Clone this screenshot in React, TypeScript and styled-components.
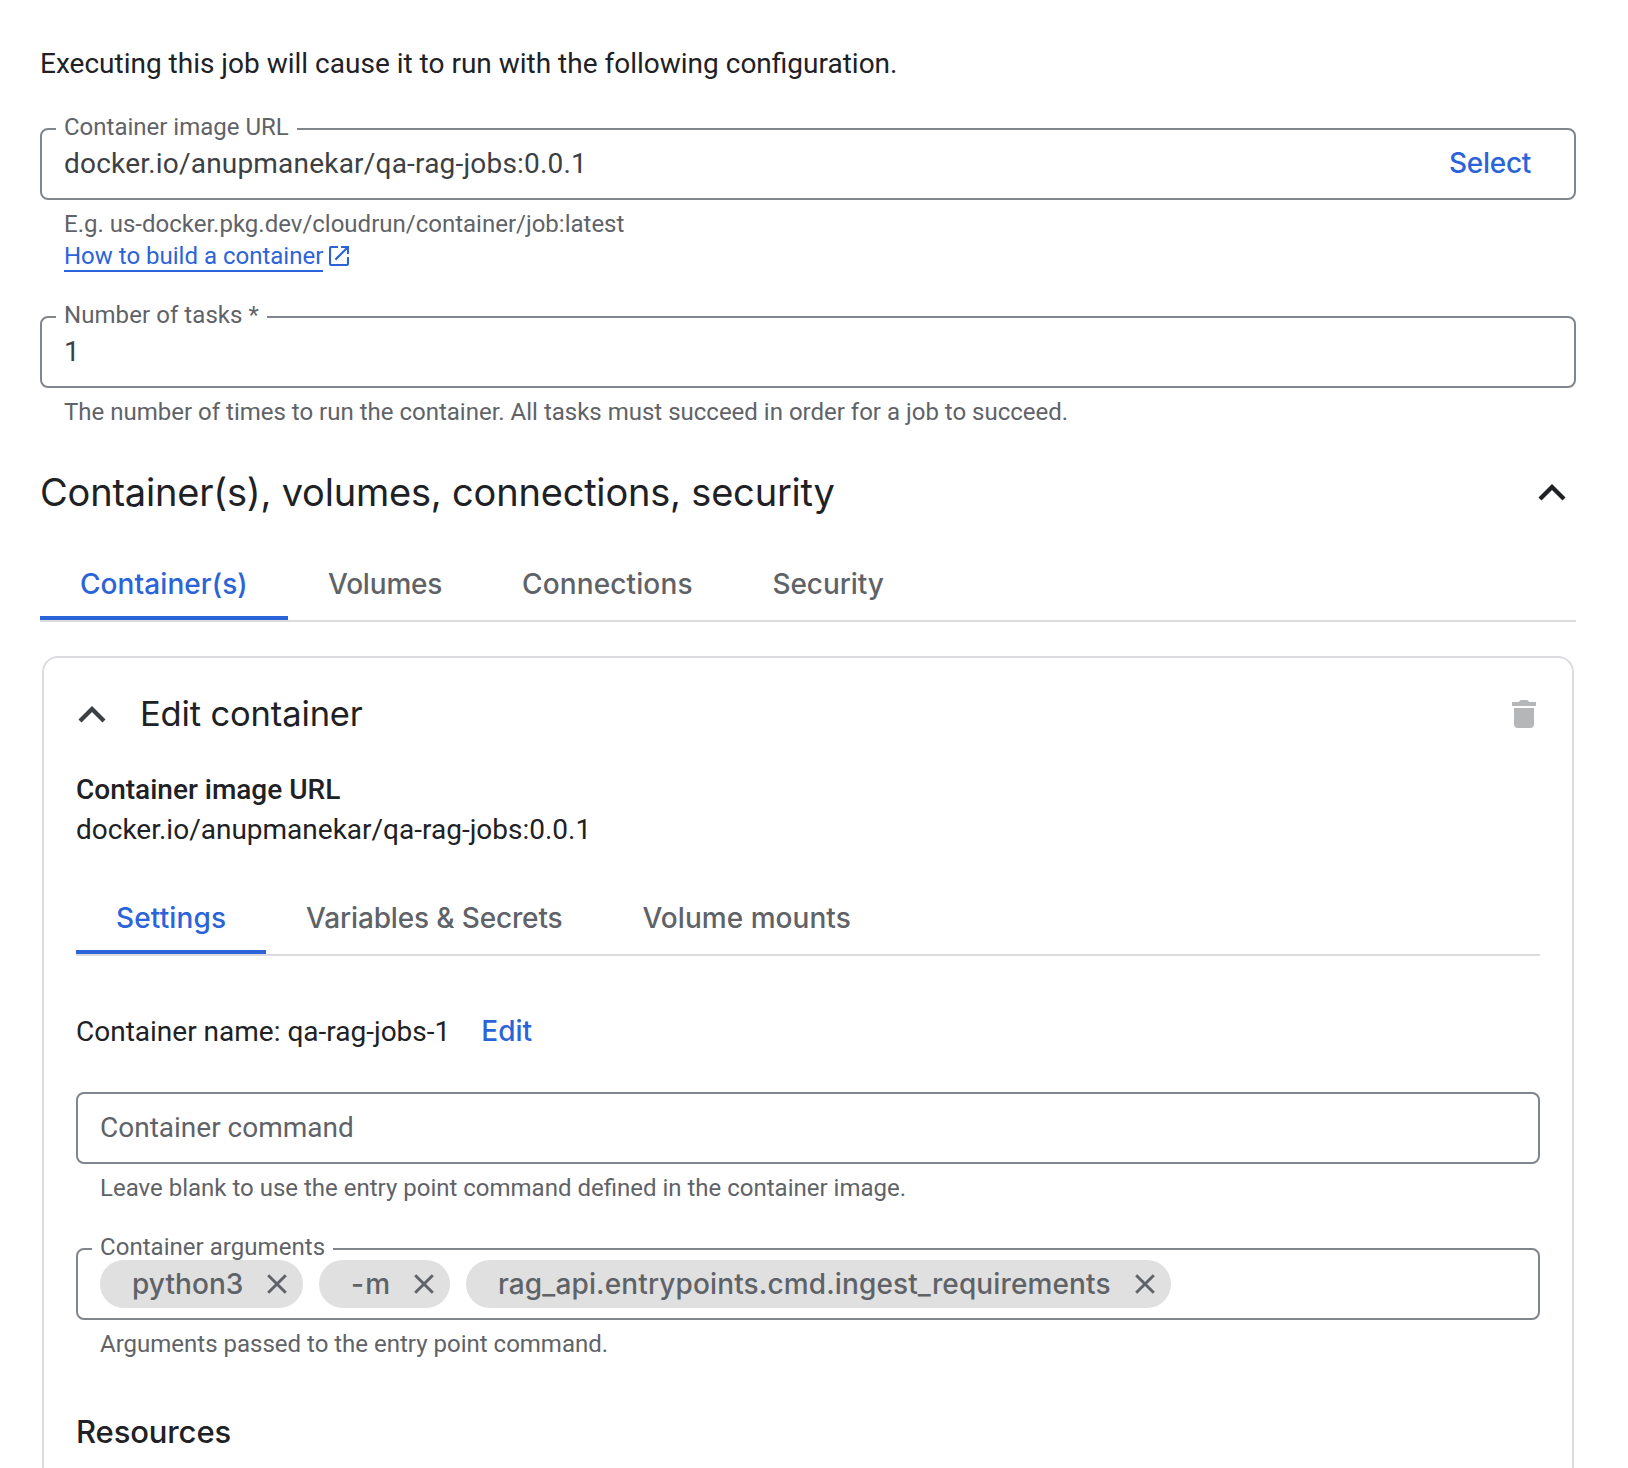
import React from "react";
import styled, { createGlobalStyle } from "styled-components";

const color = {
  text: "#202124",
  input: "#3c4043",
  muted: "#5f6368",
  blue: "#2b64d9",
  outline: "#80868b",
  divider: "#dadce0",
  chip: "#e0e0e0",
  disabled: "#b5b6b8",
};

const body = `Roboto, "Liberation Sans", sans-serif`;
const display = `Inter, "Liberation Sans", sans-serif`;

const GlobalStyle = createGlobalStyle`
  * { box-sizing: border-box; }
  body { margin: 0; background: #fff; }
`;

const Page = styled.main`
  display: flex;
  flex-direction: column;
  height: 1468px;
  padding: 44px 52px 0 40px;
  overflow: hidden;
  background: #fff;
  color: ${color.text};
  font: 400 28px/40px ${body};
`;

const Intro = styled.p`
  margin: 0 0 44px;
`;

const Field = styled.div<{ $after: number }>`
  flex: none;
  margin-bottom: ${(p) => p.$after}px;
`;

const Outline = styled.div`
  position: relative;
  display: flex;
  align-items: flex-start;
  height: 72px;
  border: 2px solid ${color.outline};
  border-radius: 8px;
`;

const FloatingLabel = styled.label<{ $tracking?: number }>`
  position: absolute;
  top: -15px;
  left: 14px;
  padding: 0 8px;
  background: #fff;
  color: ${color.muted};
  font-size: 24px;
  line-height: 24px;
  letter-spacing: ${(p) => p.$tracking ?? 0}px;
`;

const ValueRow = styled.div`
  display: flex;
  flex: 1;
  align-items: baseline;
  justify-content: space-between;
  padding: 18px 43px 0 22px;
  line-height: 32px;
`;

const Value = styled.span<{ $placeholder?: boolean; $tracking?: number }>`
  color: ${(p) => (p.$placeholder ? color.muted : color.input)};
  letter-spacing: ${(p) => p.$tracking ?? 0}px;
`;

const TextButton = styled.button<{ $tracking?: number }>`
  padding: 0;
  border: 0;
  background: none;
  color: ${color.blue};
  font: 500 28px/28px ${display};
  letter-spacing: ${(p) => p.$tracking ?? 0}px;
`;

const Help = styled.div`
  margin-top: 8px;
  padding-left: 24px;
  color: ${color.muted};
  font-size: 24px;
  line-height: 32px;
`;

const LinkRow = styled.div`
  display: flex;
  gap: 6px;
  height: 32px;
`;

const Link = styled.a`
  height: 32px;
  border-bottom: 2px solid ${color.blue};
  color: ${color.blue};
  text-decoration: none;
`;

const LinkIcon = styled.svg`
  width: 20px;
  height: 20px;
  margin-top: 6px;
  fill: none;
  stroke: ${color.blue};
  stroke-width: 2.2;
`;

const SectionHeader = styled.header`
  display: flex;
  flex: none;
  align-items: center;
  justify-content: space-between;
  height: 48px;
  margin-bottom: 28px;
  padding-right: 10px;
`;

const SectionTitle = styled.h2`
  margin: 0;
  font: 400 38px/48px ${display};
  letter-spacing: -0.2px;
`;

const ChevronIcon = styled.svg<{ $tone: string }>`
  width: 28px;
  height: 18px;
  fill: none;
  stroke: ${(p) => p.$tone};
  stroke-width: 4.3;
`;

const TabList = styled.nav`
  display: flex;
  flex: none;
  height: 78px;
  border-bottom: 2px solid ${color.divider};
`;

const TabItem = styled.button<{ $active?: boolean; $width: number; $tracking: number }>`
  width: ${(p) => p.$width}px;
  padding: 20px 0 12px 40px;
  border: 0;
  border-bottom: 4px solid ${(p) => (p.$active ? color.blue : "transparent")};
  background: none;
  color: ${(p) => (p.$active ? color.blue : color.muted)};
  font: 500 28px/40px ${display};
  letter-spacing: ${(p) => p.$tracking}px;
  text-align: left;
  white-space: nowrap;
`;

const Card = styled.section`
  display: flex;
  flex: 1;
  flex-direction: column;
  min-height: 0;
  margin: 34px 2px 0;
  padding: 32px 32px 0;
  border: 2px solid ${color.divider};
  border-bottom: 0;
  border-radius: 16px 16px 0 0;
`;

const CardHeader = styled.header`
  display: flex;
  flex: none;
  align-items: center;
  gap: 34px;
  height: 48px;
  margin-bottom: 32px;
  padding: 0 4px 0 2px;
`;

const CardTitle = styled.h3`
  flex: 1;
  margin: 0;
  font: 400 34.5px/48px ${display};
  letter-spacing: -0.14px;
`;

const TrashIcon = styled.svg`
  width: 24px;
  height: 28px;
  fill: ${color.disabled};
`;

const ImageInfo = styled.dl`
  flex: none;
  margin: 0 0 28px;
`;

const InfoTerm = styled.dt`
  font-weight: 500;
`;

const InfoValue = styled.dd`
  margin: 0;
`;

const NameRow = styled.div`
  display: flex;
  flex: none;
  align-items: baseline;
  gap: 31px;
  height: 40px;
  margin: 56px 0 40px;
`;

const ChipRow = styled.div`
  display: flex;
  gap: 16px;
  padding: 10px 22px;
`;

const ChipBody = styled.span<{ $width: number }>`
  display: flex;
  align-items: center;
  justify-content: space-between;
  width: ${(p) => p.$width}px;
  height: 48px;
  padding: 0 16px 0 32px;
  border-radius: 24px;
  background: ${color.chip};
  color: ${color.muted};
`;

const ChipText = styled.span<{ $tracking: number }>`
  font: 500 28px/40px ${display};
  letter-spacing: ${(p) => p.$tracking}px;
`;

const RemoveIcon = styled.svg`
  width: 20px;
  height: 20px;
  fill: none;
  stroke: ${color.muted};
  stroke-width: 2.9;
`;

const Subheading = styled.h4`
  margin: 0;
  font: 500 31px/48px ${display};
  letter-spacing: -0.12px;
`;

const Chevron = ({ tone }: { tone: string }) => (
  <ChevronIcon $tone={tone} viewBox="0 0 28 18">
    <path d="M2 16L14 4L26 16" />
  </ChevronIcon>
);

const Chip = ({ text, width, tracking }: { text: string; width: number; tracking: number }) => (
  <ChipBody $width={width}>
    <ChipText $tracking={tracking}>{text}</ChipText>
    <RemoveIcon viewBox="0 0 20 20">
      <path d="M1.2 1.2L18.8 18.8M18.8 1.2L1.2 18.8" />
    </RemoveIcon>
  </ChipBody>
);

type TabSpec = { label: string; width: number; tracking: number };

const sectionTabs: TabSpec[] = [
  { label: "Container(s)", width: 248, tracking: 0.08 },
  { label: "Volumes", width: 194, tracking: -0.19 },
  { label: "Connections", width: 250.5, tracking: 0.13 },
  { label: "Security", width: 191, tracking: -0.1 },
];

const containerTabs: TabSpec[] = [
  { label: "Settings", width: 190, tracking: 0.12 },
  { label: "Variables & Secrets", width: 336.5, tracking: -0.15 },
  { label: "Volume mounts", width: 288, tracking: 0.04 },
];

const args = [
  { text: "python3", width: 203, tracking: 0.05 },
  { text: "-m", width: 131, tracking: 1.2 },
  { text: "rag_api.entrypoints.cmd.ingest_requirements", width: 705, tracking: 0.13 },
];

const Tabs = ({ items }: { items: TabSpec[] }) => (
  <TabList>
    {items.map((t, i) => (
      <TabItem key={t.label} $active={i === 0} $width={t.width} $tracking={t.tracking}>
        {t.label}
      </TabItem>
    ))}
  </TabList>
);

export default function App() {
  return (
    <>
      <GlobalStyle />
      <Page>
        <Intro>Executing this job will cause it to run with the following configuration.</Intro>

        <Field $after={44}>
          <Outline>
            <FloatingLabel>Container image URL</FloatingLabel>
            <ValueRow>
              <Value $tracking={0.2}>docker.io/anupmanekar/qa-rag-jobs:0.0.1</Value>
              <TextButton $tracking={-0.3}>Select</TextButton>
            </ValueRow>
          </Outline>
          <Help>
            E.g. us-docker.pkg.dev/cloudrun/container/job:latest
            <LinkRow>
              <Link>How to build a container</Link>
              <LinkIcon viewBox="0 0 20 20">
                <path d="M9 1H2.6Q1 1 1 2.6V17.4Q1 19 2.6 19H17.4Q19 19 19 17.4V11" />
                <path d="M12 1H19V8M19 1L6.4 13.6" />
              </LinkIcon>
            </LinkRow>
          </Help>
        </Field>

        <Field $after={40}>
          <Outline>
            <FloatingLabel $tracking={0.07}>Number of tasks *</FloatingLabel>
            <ValueRow>
              <Value>1</Value>
            </ValueRow>
          </Outline>
          <Help>
            The number of times to run the container. All tasks must succeed in order for a job to succeed.
          </Help>
        </Field>

        <SectionHeader>
          <SectionTitle>Container(s), volumes, connections, security</SectionTitle>
          <Chevron tone={color.text} />
        </SectionHeader>

        <Tabs items={sectionTabs} />

        <Card>
          <CardHeader>
            <Chevron tone={color.input} />
            <CardTitle>Edit container</CardTitle>
            <TrashIcon viewBox="0 0 24 28">
              <path d="M0 2H7Q7.6 0 9.4 0H14.6Q16.4 0 17 2H24V6H0Z" />
              <path d="M2 8H22V24Q22 28 18 28H6Q2 28 2 24Z" />
            </TrashIcon>
          </CardHeader>

          <ImageInfo>
            <InfoTerm>Container image URL</InfoTerm>
            <InfoValue>docker.io/anupmanekar/qa-rag-jobs:0.0.1</InfoValue>
          </ImageInfo>

          <Tabs items={containerTabs} />

          <NameRow>
            <span>Container name: qa-rag-jobs-1</span>
            <TextButton>Edit</TextButton>
          </NameRow>

          <Field $after={44}>
            <Outline>
              <ValueRow>
                <Value $placeholder>Container command</Value>
              </ValueRow>
            </Outline>
            <Help>Leave blank to use the entry point command defined in the container image.</Help>
          </Field>

          <Field $after={48}>
            <Outline>
              <FloatingLabel $tracking={0.04}>Container arguments</FloatingLabel>
              <ChipRow>
                {args.map((a) => (
                  <Chip key={a.text} {...a} />
                ))}
              </ChipRow>
            </Outline>
            <Help>Arguments passed to the entry point command.</Help>
          </Field>

          <Subheading>Resources</Subheading>
        </Card>
      </Page>
    </>
  );
}
